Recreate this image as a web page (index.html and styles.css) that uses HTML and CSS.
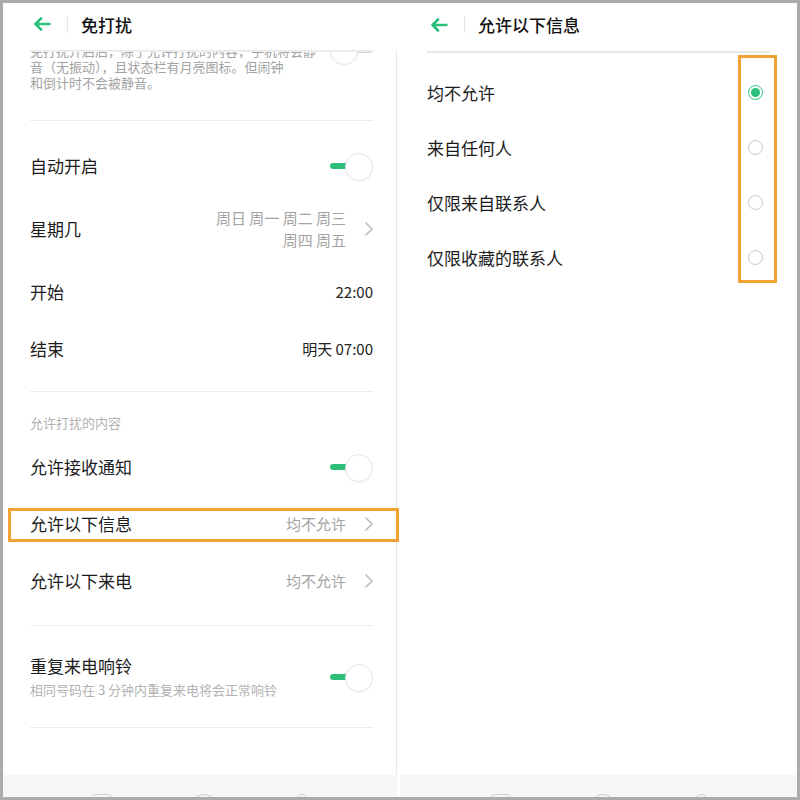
FILE: index.html
```html
<!DOCTYPE html>
<html lang="zh-CN">

<head>
    <meta charset="UTF-8">
    <meta name="viewport" content="width=device-width, initial-scale=1.0">
    <title>免打扰</title>
    <link rel="stylesheet" href="styles.css">
</head>

<body>
    <div class="frame">
        <section class="panel panel-left">
            <header class="bar">
                <span class="back">
                    <svg width="18" height="14" viewBox="0 0 18 14"><path d="M16.5 7H2.5M8 1.5L2.5 7 8 12.5" /></svg>
                </span>
                <span class="bar-sep"></span>
                <h1>免打扰</h1>
            </header>

            <div class="scroll">
                <div class="edge"></div>

                <div class="intro">
                    <p>免打扰开启后，除了允许打扰的内容，手机将会静<br>音（无振动），且状态栏有月亮图标。但闹钟<br>和倒计时不会被静音。</p>
                    <span class="switch off"></span>
                </div>

                <div class="group group-time">
                    <div class="row">
                        <span class="label">自动开启</span>
                        <span class="switch"></span>
                    </div>
                    <div class="row row-tall">
                        <span class="label">星期几</span>
                        <span class="value muted">
                            <span class="days">周日 周一 周二 周三<br>周四 周五</span>
                            <svg class="chev" width="8" height="14" viewBox="0 0 8 14"><path d="M1 1l6 6-6 6" /></svg>
                        </span>
                    </div>
                    <div class="row">
                        <span class="label">开始</span>
                        <span class="value">22:00</span>
                    </div>
                    <div class="row">
                        <span class="label">结束</span>
                        <span class="value">明天 07:00</span>
                    </div>
                </div>

                <div class="group group-allow">
                    <div class="caption">允许打扰的内容</div>
                    <div class="row">
                        <span class="label">允许接收通知</span>
                        <span class="switch"></span>
                    </div>
                    <div class="row">
                        <span class="label">允许以下信息</span>
                        <span class="value muted">
                            均不允许
                            <svg class="chev" width="8" height="14" viewBox="0 0 8 14"><path d="M1 1l6 6-6 6" /></svg>
                        </span>
                    </div>
                    <div class="row">
                        <span class="label">允许以下来电</span>
                        <span class="value muted">
                            均不允许
                            <svg class="chev" width="8" height="14" viewBox="0 0 8 14"><path d="M1 1l6 6-6 6" /></svg>
                        </span>
                    </div>
                </div>

                <div class="group group-repeat">
                    <div class="row">
                        <div class="label-block">
                            <span class="label">重复来电响铃</span>
                            <span class="sub">相同号码在 3 分钟内重复来电将会正常响铃</span>
                        </div>
                        <span class="switch"></span>
                    </div>
                </div>
            </div>

            <div class="navbar">
                <span class="nav-icon nav-menu"></span>
                <span class="nav-icon nav-home"></span>
                <span class="nav-icon nav-back"></span>
            </div>
        </section>

        <section class="panel panel-right">
            <header class="bar">
                <span class="back">
                    <svg width="18" height="14" viewBox="0 0 18 14"><path d="M16.5 7H2.5M8 1.5L2.5 7 8 12.5" /></svg>
                </span>
                <span class="bar-sep"></span>
                <h1>允许以下信息</h1>
            </header>

            <div class="options">
                <div class="options-edge"></div>
                <div class="option">
                    <span class="label">均不允许</span>
                    <span class="radio checked"></span>
                </div>
                <div class="option">
                    <span class="label">来自任何人</span>
                    <span class="radio"></span>
                </div>
                <div class="option">
                    <span class="label">仅限来自联系人</span>
                    <span class="radio"></span>
                </div>
                <div class="option">
                    <span class="label">仅限收藏的联系人</span>
                    <span class="radio"></span>
                </div>
            </div>

            <div class="navbar">
                <span class="nav-icon nav-menu"></span>
                <span class="nav-icon nav-home"></span>
                <span class="nav-icon nav-back"></span>
            </div>
        </section>

        <!-- 标注框 -->
        <div class="mark mark-row"></div>
        <div class="mark mark-radios"></div>
    </div>
</body>

</html>
```

FILE: styles.css
```css
:root {
    --green: #2bbf79;
    --text: #1b1b1b;
    --muted: #a3a3a3;
    --light: #b3b3b3;
    --line: #ececec;
    --mark: #f1a232;
}

* {
    margin: 0;
    padding: 0;
    box-sizing: border-box;
}

body {
    font-family: "Noto Sans CJK SC", "Noto Sans", sans-serif;
    color: var(--text);
    background: #fff;
}

.frame {
    position: relative;
    width: 800px;
    height: 800px;
    border: 3px solid #ababab;
    display: flex;
    background: #fff;
}

.panel {
    display: flex;
    flex-direction: column;
    height: 100%;
}

.panel-left {
    width: 394px;
}

.panel-right {
    flex: 1;
    margin-left: 3px;
}

/* 顶栏 */
.bar {
    height: 44px;
    padding-bottom: 1px;
    display: flex;
    align-items: center;
    flex-shrink: 0;
    background: #fff;
    position: relative;
    z-index: 2;
}

.panel-left .bar {
    height: 47px;
    padding-bottom: 5px;
}

.back {
    display: flex;
    align-items: center;
    margin-left: 30px;
}

.back svg path {
    fill: none;
    stroke: var(--green);
    stroke-width: 2.6;
    stroke-linecap: round;
    stroke-linejoin: round;
}

.bar-sep {
    width: 1px;
    height: 17px;
    background: #e6e6e6;
    margin: 0 13px 0 16px;
}

.bar h1 {
    font-size: 17px;
    font-weight: 500;
    color: #111;
}

/* 左侧列表 */
.scroll {
    position: relative;
    flex: 1;
    overflow: hidden;
    padding: 0 23px 0 27px;
    border-right: 1px solid #e8e8e8;
}

.edge {
    position: absolute;
    top: 0;
    left: 27px;
    right: 23px;
    height: 2px;
    background: linear-gradient(#e4e4e4, #f4f4f4);
    z-index: 1;
}

.intro {
    display: flex;
    justify-content: space-between;
    align-items: flex-start;
    margin-top: -7px;
    padding-bottom: 29px;
    border-bottom: 1px solid var(--line);
}

.intro p {
    font-size: 13px;
    line-height: 16px;
    color: var(--muted);
}

.intro .switch {
    margin-top: -6px;
}

.group {
    border-bottom: 1px solid var(--line);
}

.group-time {
    padding: 16px 0 14px;
}

.group-allow {
    padding: 23px 0 16px;
}

.group-repeat {
    padding: 28px 0 28px;
}

.caption {
    font-size: 13px;
    line-height: 16px;
    color: var(--light);
    margin-bottom: 7px;
}

.row {
    display: flex;
    align-items: center;
    justify-content: space-between;
    min-height: 57px;
}

.group-repeat .row {
    min-height: 0;
}

.row-tall {
    min-height: 69px;
}

.label {
    font-size: 17px;
    line-height: 24px;
}

.label-block {
    display: flex;
    flex-direction: column;
}

.sub {
    font-size: 13px;
    line-height: 18px;
    color: var(--light);
    margin-top: 3px;
}

.value {
    display: flex;
    align-items: center;
    font-size: 15px;
    color: #222;
}

.value.muted {
    color: var(--muted);
}

.days {
    text-align: right;
    line-height: 22px;
}

.chev {
    margin-left: 19px;
}

.chev path {
    fill: none;
    stroke: #bcbcbc;
    stroke-width: 1.6;
    stroke-linecap: round;
    stroke-linejoin: round;
}

/* 开关 */
.switch {
    position: relative;
    width: 43px;
    height: 26px;
    flex-shrink: 0;
}

.switch::before {
    content: "";
    position: absolute;
    left: 0;
    top: 10px;
    width: 19px;
    height: 6px;
    border-radius: 3px;
    background: var(--green);
}

.switch::after {
    content: "";
    position: absolute;
    right: 0;
    top: 0;
    width: 26px;
    height: 26px;
    border-radius: 50%;
    background: #fff;
    border: 1px solid #e5e5e5;
    box-shadow: 0 1px 2px rgba(0, 0, 0, 0.04);
}

.switch.off::before {
    left: auto;
    right: 0;
    background: #d6d6d6;
}

.switch.off::after {
    right: auto;
    left: 0;
}

/* 右侧选项 */
.options {
    flex: 1;
    padding: 0 27px;
}

.options-edge {
    height: 2px;
    margin-top: 4px;
    margin-bottom: 12px;
    background: #e8e8e8;
}

.option {
    display: flex;
    align-items: center;
    justify-content: space-between;
    height: 55px;
}

.radio {
    width: 15px;
    height: 15px;
    margin-right: 7px;
    border-radius: 50%;
    border: 1.5px solid #c6c6c6;
    display: flex;
    align-items: center;
    justify-content: center;
}

.radio.checked {
    border-color: var(--green);
}

.radio.checked::after {
    content: "";
    width: 9px;
    height: 9px;
    border-radius: 50%;
    background: var(--green);
}

/* 底部导航 */
.navbar {
    height: 22px;
    flex-shrink: 0;
    background: #f6f6f6;
    display: flex;
    justify-content: center;
    gap: 82px;
    overflow: hidden;
}

.nav-icon {
    width: 20px;
    height: 16px;
    margin-top: 19px;
    border: 1.5px solid #d0d0d0;
}

.nav-menu {
    border-radius: 4px;
}

.nav-home {
    border-radius: 50%;
}

.nav-back {
    width: 12px;
    border-radius: 6px 6px 0 0;
}

/* 标注框 */
.mark {
    position: absolute;
    border: 3px solid var(--mark);
    z-index: 5;
}

.mark-row {
    left: 5px;
    top: 505px;
    width: 391px;
    height: 34px;
}

.mark-radios {
    left: 735px;
    top: 52px;
    width: 39px;
    height: 228px;
}
```
